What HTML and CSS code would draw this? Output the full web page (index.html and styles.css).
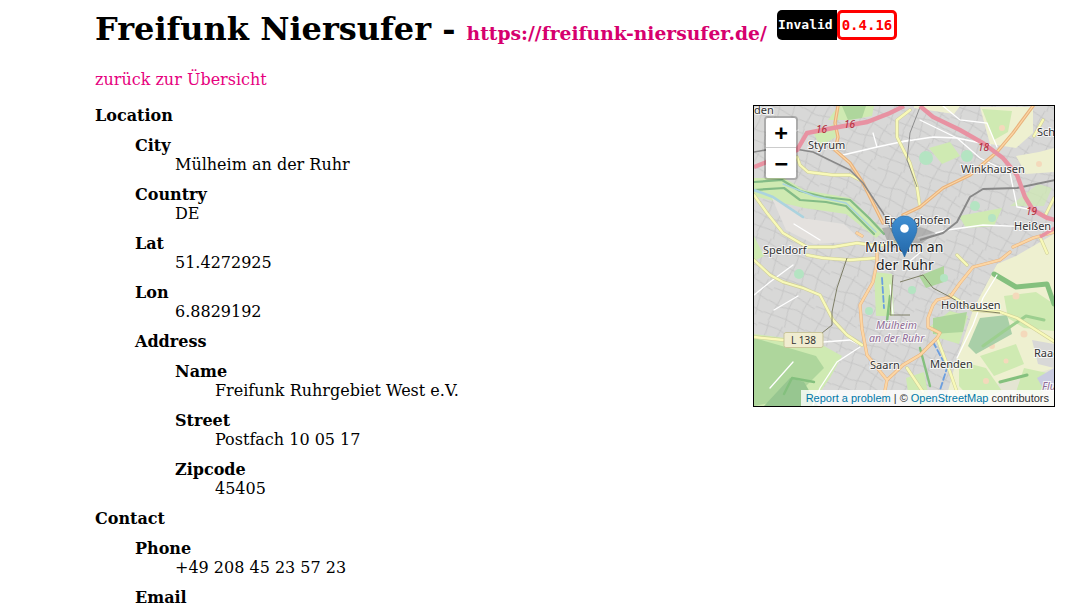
FILE: index.html
```html
<!DOCTYPE html>
<html lang="de">
<head>
<meta charset="utf-8">
<title>Freifunk Niersufer</title>
<link rel="stylesheet" href="styles.css">
</head>
<body>
<main class="page">
  <h1 class="title">Freifunk Niersufer - <a class="site-link" href="#">https://freifunk-niersufer.de/</a>
    <span class="badge"><span class="badge-label">Invalid</span><span class="badge-version">0.4.16</span></span>
  </h1>
  <p class="back"><a href="#">zurück zur Übersicht</a></p>
  <div class="map">
    <svg class="map-art" width="300" height="300" viewBox="0 0 300 300">
      <defs>
        <pattern id="streets" width="46" height="38" patternUnits="userSpaceOnUse" patternTransform="rotate(24)">
          <path d="M0 6 20 4 46 9M0 19 14 21 30 17 46 20M0 32 24 30 46 33M9 0 11 12 8 38M24 0 22 20 26 38M38 0 36 14 40 38" fill="none" stroke="#c0c0c0" stroke-width=".7"/>
        </pattern>
        <linearGradient id="pin" x1="0" y1="0" x2="0" y2="1">
          <stop offset="0" stop-color="#3f8fd3"/><stop offset="1" stop-color="#2367a8"/>
        </linearGradient>
      </defs>
      <rect width="300" height="300" fill="#d8d8d7"/>
      <rect width="300" height="300" fill="url(#streets)"/>

      <g fill="#eef0d0">
        <path d="M226 1 279 1 279 27 262 42 236 38Z"/>
        <path d="M300 128 262 150 243 158 219 204 203 252 190 300H300Z"/>
        <path d="M160 2 200 8 206 0H160Z"/>
        <path d="M262 50 285 46 300 42 300 66 272 68Z"/>
      </g>
      <g fill="#d8d8d7">
        <path d="M278 234 300 238V262L284 258Z"/>
        <path d="M212 284 262 274 300 262V300H214Z" opacity=".45"/>
      </g>
      <g fill="#cfeab2">
        <path d="M0 228 32 232 70 240 88 250 76 272 56 300H0Z"/>
        <path d="M120 0H84L74 14 96 14 118 10Z"/>
        <path d="M228 3 258 5 254 26 240 34Z"/>
        <path d="M174 222 196 205 214 210 205 238 185 232Z"/>
        <path d="M205 110 248 102 240 120 212 122Z"/>
        <path d="M175 42 196 36 206 50 188 58Z"/>
        <path d="M0 72 30 72 50 84 96 92 130 125 122 132 92 108 50 102 0 90Z"/>
        <path d="M120 166 138 168 140 210 122 210Z"/>
        <path d="M205 255 232 262 248 285 220 296 205 280Z"/>
        <path d="M60 28 80 18 84 30 66 40Z"/>
        <path d="M0 130 10 150 0 155Z"/>
        <path d="M250 190 282 186 300 198 300 225 270 222 254 212Z"/>
        <path d="M226 250 262 238 270 258 240 270Z"/>
        <path d="M270 262 298 268 286 290 262 286Z"/>
        <path d="M152 272 170 266 176 298 156 300Z"/>
        <path d="M256 100 284 78 298 82 290 100Z" opacity=".7"/>
        <path d="M148 148 166 140 174 152 154 160Z" opacity=".0"/>
      </g>
      <g fill="#f4d9bb">
        <circle cx="262" cy="190" r="3.5"/><circle cx="238" cy="240" r="3"/><circle cx="270" cy="228" r="3.5"/>
        <circle cx="252" cy="255" r="2.5"/><circle cx="232" cy="275" r="3"/><circle cx="16" cy="262" r="2.5"/>
        <circle cx="248" cy="22" r="3"/><circle cx="226" cy="96" r="0"/><circle cx="285" cy="58" r="3"/>
      </g>
      <g fill="#aed69c">
        <path d="M0 232 28 240 62 250 70 262 40 292 0 300Z"/>
        <path d="M179 212 213 206 209 226 179 228Z"/>
        <path d="M88 0H112L108 12 94 14Z"/>
        <path d="M165 170 190 160 190 176 172 182Z"/>
      </g>
      <path d="M10 300 36 272 50 276 64 300Z" fill="#97c690"/>
      <path d="M226 212 253 209 258 228 222 248 214 240Z" fill="#a9cfa8"/>
      <g fill="#c9cbe0">
        <path d="M283 272 300 262V280L290 284Z"/>
      </g>
      <g fill="#e4e1de">
        <path d="M18 92 48 112 90 118 108 135 60 138 32 124Z"/>
      </g>
      <g fill="#b4e4c2">
        <circle cx="172" cy="52" r="7"/><circle cx="213" cy="50" r="6"/><circle cx="221" cy="100" r="5"/>
        <circle cx="45" cy="168" r="5"/><circle cx="115" cy="205" r="4"/>
        <circle cx="190" cy="172" r="4"/><circle cx="158" cy="184" r="4"/><circle cx="238" cy="112" r="4"/>
      </g>

      <g fill="none" stroke-linecap="round" stroke-linejoin="round">
        <path d="M0 76 28 74 46 85 70 91 96 94 115 112 130 128M0 84 30 82 46 94 72 96 92 100 120 128" stroke="#83bb86" stroke-width="2.2"/>
        <path d="M240 168 262 181 293 178 300 198" stroke="#84c07e" stroke-width="5"/>
        <path d="M246 276 273 269" stroke="#84c07e" stroke-width="3"/>
        <path d="M229 240 250 225 272 210 290 214" stroke="#9ccf8f" stroke-width="3"/>
        <path d="M166 242 176 280M133 215 136 190M30 288 38 272 60 276" stroke="#84c07e" stroke-width="2.4"/>
        <path d="M0 84 19 91 49 111" stroke="#abd3df" stroke-width="2.6"/>
        <path d="M29 78 60 90 92 97 122 126" stroke="#abd3df" stroke-width="1.4"/>
        <path d="M128 172 130 202 M179 236 193 262 186 284" stroke="#6b9ee0" stroke-width="1.8" stroke-dasharray="6 3"/>
      </g>

      <g fill="none" stroke="#fff" stroke-width="1.3" stroke-linecap="round">
        <path d="M89 49 123 41 156 34M119 27 123 41"/>
        <path d="M146 36 179 31 203 32 236 39M203 32 226 52 246 62"/>
        <path d="M189 0 206 14 233 17 243 41M256 67 263 101 279 104M166 14 203 32"/>
        <path d="M164 132 193 124 229 119 279 121"/>
        <path d="M0 189 16 176 39 159M69 236 96 234 106 239M39 256 16 282"/>
        <path d="M106 241 83 256 66 282 59 299"/>
        <path d="M243 169 229 192 219 219 206 246 203 252"/>
        <path d="M136 179 139 209M40 118 66 134M14 42 44 24"/>
        <path d="M150 160 168 145M20 204 44 190"/>
      </g>

      <g fill="none" stroke-linejoin="round" stroke-linecap="round">
        <path d="M43 51 46 59 54 66 79 69 96 69 106 74M0 89 13 107 29 127 53 141 79 141 103 137 125 140 150 134M0 154 16 169 29 176 49 182 66 189 79 214 93 229 108 239M0 231 29 234M53 149 69 152 96 154 123 152M146 37 156 57 163 81 166 101M156 4 143 14 143 31 153 51M196 189 219 204 246 206 263 212 279 222 301 236M183 232 196 266 203 286M153 262 169 286M203 149 213 159M286 131 293 147M289 14 280 30M300 92 292 108" stroke="#cfcf98" stroke-width="3.4"/>
        <path d="M43 51 46 59 54 66 79 69 96 69 106 74M0 89 13 107 29 127 53 141 79 141 103 137 125 140 150 134M0 154 16 169 29 176 49 182 66 189 79 214 93 229 108 239M0 231 29 234M53 149 69 152 96 154 123 152M146 37 156 57 163 81 166 101M156 4 143 14 143 31 153 51M196 189 219 204 246 206 263 212 279 222 301 236M183 232 196 266 203 286M153 262 169 286M203 149 213 159M286 131 293 147M289 14 280 30M300 92 292 108" stroke="#f8f9b8" stroke-width="2.3"/>
        <path d="M123 140 123 156 119 176 106 199 108 223 113 249 133 274 128 300M133 274 149 259 166 249 183 232 186 227 174 221 174 212 179 199 183 194 196 191 206 177 219 161 246 154 256 146M259 141 279 132 300 126M108 130 103 127" stroke="#e8b27c" stroke-width="3.2"/>
        <path d="M123 140 123 156 119 176 106 199 108 223 113 249 133 274 128 300M133 274 149 259 166 249 183 232 186 227 174 221 174 212 179 199 183 194 196 191 206 177 219 161 246 154 256 146M259 141 279 132 300 126M108 130 103 127" stroke="#fcd6a4" stroke-width="2.2"/>
        <path d="M84 0 81 17 84 31 81 44 96 57 109 77 119 97 129 117M279 0 259 27 243 46 216 69 189 82 166 101 149 109" stroke="#e8b27c" stroke-width="3.4"/>
        <path d="M84 0 81 17 84 31 81 44 96 57 109 77 119 97 129 117M279 0 259 27 243 46 216 69 189 82 166 101 149 109" stroke="#fcd6a4" stroke-width="1.2"/>
      </g>

      <g fill="none" stroke-linejoin="round">
        <path d="M0 46 29 41 59 46 96 64 109 77 129 107 139 127" stroke="#888" stroke-width="1.5"/>
        <path d="M301 74 263 82 229 83 216 91 203 116 189 127 166 134" stroke="#888" stroke-width="1.9"/>
        <path d="M166 1 156 27 153 54 163 81" stroke="#777" stroke-width=".8"/>
        <path d="M93 152 83 182 78 206 78 219 68 227M139 169 136 209 156 209M146 176 169 169 179 182 196 191 219 204 246 207" stroke="#74745a" stroke-width=".9"/>
      </g>

      <g fill="none" stroke="#e892a2">
        <path d="M0 61 43 44 53 27 79 22 113 16 136 7 150 0" stroke-width="4.4"/>
        <path d="M166 0 179 11 206 24 229 37 249 52 263 69 271 91 279 104 293 112 301 114" stroke-width="4.4"/>
        <path d="M301 122 286 131" stroke-width="3.4"/>
      </g>

      <path d="M128 122 158 118 182 127 164 140 136 142Z" fill="#8a8a8a" opacity=".5"/>

      <g class="ref-num">
        <text x="62" y="27">16</text><text x="90" y="22">16</text>
        <text x="224" y="45">18</text><text x="272" y="109">19</text>
      </g>
      <g class="place">
        <text x="54" y="43">Styrum</text><text x="207" y="67">Winkhausen</text>
        <text x="283" y="30">Sch</text><text x="260" y="124">Heißen</text>
        <text x="130" y="118">Eppinghofen</text><text x="9" y="148">Speldorf</text>
        <text x="187" y="203">Holthausen</text><text x="176" y="262">Menden</text>
        <text x="116" y="263">Saarn</text><text x="280" y="251">Raad</text>
        <text x="0" y="8">den</text>
      </g>
      <g class="place-big">
        <text x="111" y="146">Mülheim an</text><text x="122" y="164">der Ruhr</text>
      </g>
      <g class="district">
        <text x="122" y="223">Mülheim</text><text x="115" y="236">an der Ruhr</text><text x="288" y="284">Flu</text>
      </g>
      <rect class="shield" x="30" y="226.5" width="39" height="15" rx="2"/>
      <text class="shield-text" x="49.5" y="238">L 138</text>

      <path d="M150.5 110C143.4 110 138 115.6 138 122.5 138 130.5 146.5 140 150.5 151 154.5 140 163 130.5 163 122.5 163 115.6 157.6 110 150.5 110Z" fill="url(#pin)" stroke="#2a6ea8" stroke-width=".7"/>
      <circle cx="150.5" cy="122.5" r="4.3" fill="#fff"/>
    </svg>
    <div class="zoom">
      <a class="zoom-btn" href="#">+</a>
      <a class="zoom-btn" href="#">−</a>
    </div>
    <div class="attribution"><a href="#">Report a problem</a> | © <a href="#">OpenStreetMap</a> contributors</div>
  </div>
  <dl class="tree">
    <dt>Location</dt>
    <dd>
      <dl class="tree">
        <dt>City</dt><dd>Mülheim an der Ruhr</dd>
        <dt>Country</dt><dd>DE</dd>
        <dt>Lat</dt><dd>51.4272925</dd>
        <dt>Lon</dt><dd>6.8829192</dd>
        <dt>Address</dt>
        <dd>
          <dl class="tree">
            <dt>Name</dt><dd>Freifunk Ruhrgebiet West e.V.</dd>
            <dt>Street</dt><dd>Postfach 10 05 17</dd>
            <dt>Zipcode</dt><dd>45405</dd>
          </dl>
        </dd>
      </dl>
    </dd>
    <dt>Contact</dt>
    <dd>
      <dl class="tree">
        <dt>Phone</dt><dd>+49 208 45 23 57 23</dd>
        <dt>Email</dt><dd>kontakt@freifunk-niersufer.de</dd>
      </dl>
    </dd>
  </dl>
</main>
</body>
</html>
```
FILE: styles.css
```css
html, body {
  margin: 0;
  height: 604px;
  overflow: hidden;
  background: #fff;
}
body {
  font-family: "DejaVu Serif", serif;
  font-size: 16px;
  line-height: 19px;
  color: #000;
}
a {
  color: #e6007e;
  text-decoration: none;
}
.page {
  width: 960px;
  margin-left: 95px;
}
.title {
  margin: 0;
  padding-top: 10px;
  height: 38px;
  font-size: 32px;
  line-height: 38px;
  font-weight: 700;
  white-space: nowrap;
}
.site-link {
  font-size: 18.72px;
  color: #d6006e;
}
.badge {
  display: inline-flex;
  vertical-align: 11px;
  height: 30px;
  margin-left: -1px;
  font-family: "DejaVu Sans Mono", monospace;
  font-size: 13px;
  line-height: 24px;
  font-weight: 700;
}
.badge-label {
  background: #000;
  color: #fff;
  padding: 3px 4px 3px 1px;
  border-radius: 5px 0 0 5px;
}
.badge-version {
  background: #fff;
  color: #f00;
  border: 3px solid #f00;
  border-radius: 5px;
  padding: 0 2px;
  font-size: 14px;
}
.back {
  margin: 22px 0 17px;
}
.map {
  float: right;
  position: relative;
  width: 300px;
  height: 300px;
  border: 1px solid #000;
  margin-top: -1px;
  overflow: hidden;
}
.map-art {
  display: block;
}
.place text, .place-big text, .district text {
  font-family: "Noto Sans", sans-serif;
  paint-order: stroke;
  stroke: rgba(255,255,255,.75);
  stroke-width: 2px;
}
.place text {
  font-size: 11px;
  fill: #333;
}
.place-big text {
  font-size: 14px;
  fill: #222;
}
.district text {
  font-size: 10.5px;
  font-style: italic;
  fill: #8f6c95;
}
.ref-num text {
  font-family: "Noto Sans", sans-serif;
  font-size: 10px;
  font-style: italic;
  fill: #b02a3a;
}
.shield {
  fill: #f0ecd0;
  stroke: #c9c59a;
}
.shield-text {
  font-family: "Noto Sans", sans-serif;
  font-size: 10px;
  fill: #333;
  text-anchor: middle;
}
.zoom {
  position: absolute;
  top: 10px;
  left: 10px;
  display: flex;
  flex-direction: column;
  border: 2px solid rgba(0,0,0,.2);
  border-radius: 4px;
  background-clip: padding-box;
}
.zoom-btn {
  display: block;
  box-sizing: border-box;
  width: 30px;
  height: 30px;
  background: #fff;
  color: #000;
  text-align: center;
  font: 700 22px/30px "DejaVu Sans Mono", monospace;
}
.zoom-btn:first-child {
  border-bottom: 1px solid #ccc;
  border-radius: 2px 2px 0 0;
}
.zoom-btn:last-child {
  line-height: 32px;
  border-radius: 0 0 2px 2px;
}
.attribution {
  position: absolute;
  right: 0;
  bottom: 0;
  padding: 0 5px;
  background: rgba(255,255,255,.8);
  font: 11px/16px "Liberation Sans", sans-serif;
  color: #333;
  white-space: nowrap;
}
.attribution a {
  color: #0078a8;
}
.tree {
  margin: 0;
}
.tree dt {
  font-weight: 700;
  margin-top: 11px;
}
.tree dd {
  margin: 0 0 0 40px;
}
```
